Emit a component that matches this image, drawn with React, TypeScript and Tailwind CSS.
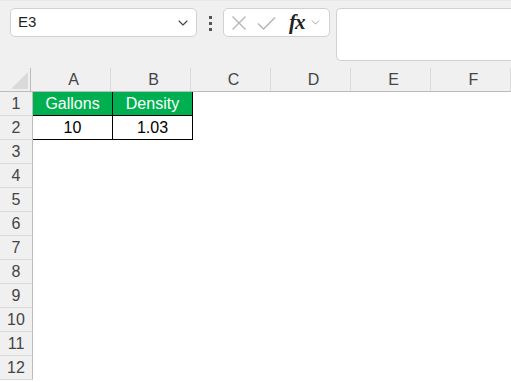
import {ChevronDown} from "lucide-react";

const columns = ["A", "B", "C", "D", "E", "F"];
const rows = Array.from({length: 12}, (_, i) => i + 1);

const cells: Record<string, {text: string; className: string}> = {
  A1: {text: "Gallons", className: "bg-[#00b050] text-white border-r border-b border-black"},
  B1: {text: "Density", className: "bg-[#00b050] text-white border-r border-b border-black"},
  A2: {text: "10", className: "bg-white text-black border-r border-b border-black"},
  B2: {text: "1.03", className: "bg-white text-black border-r border-b border-black"},
};

function Toolbar() {
  return (
    <div className="flex items-start h-[68px] bg-[#f0f0f0] pl-[10px] pt-[7px] border-t border-[#e8e8e8]">
      <div
        className="flex items-center justify-between w-[187px] h-[29px] bg-white border border-[#d1d1d1] rounded-[5px] pl-[7px] pr-[5px]">
        <span className="text-[15px] text-[#1f1f1f]">E3</span>
        <ChevronDown size={16} strokeWidth={1.6} className="text-[#444]"/>
      </div>

      <div className="flex flex-col gap-[3px] w-[26px] items-center pt-[8px]">
        <span className="w-[3px] h-[3px] bg-[#555]"/>
        <span className="w-[3px] h-[3px] bg-[#555]"/>
        <span className="w-[3px] h-[3px] bg-[#555]"/>
      </div>

      <div className="flex items-center w-[107px] h-[29px] bg-white border border-[#d1d1d1] rounded-[5px] pl-[7px]">
        <svg width="16" height="16" viewBox="0 0 16 16" className="text-[#b3b3b3]">
          <path d="M1.5 1.5 L14.5 14.5 M14.5 1.5 L1.5 14.5" stroke="currentColor" strokeWidth="1.3" fill="none"/>
        </svg>
        <svg width="19" height="16" viewBox="0 0 19 16" className="ml-[10px] text-[#b3b3b3]">
          <path d="M1 8.5 L6.5 14 L18 2.5" stroke="currentColor" strokeWidth="1.3" fill="none"/>
        </svg>
        <span className="ml-[13px] text-[21px] italic font-semibold text-[#222] leading-none tracking-[-1px]"
              style={{fontFamily: '"Liberation Serif", serif'}}>fx</span>
        <ChevronDown size={13} strokeWidth={1.4} className="ml-[4px] text-[#888]"/>
      </div>

      <div className="ml-[6px] flex-1 h-[53px] bg-white border border-[#d1d1d1] rounded-l-[5px] border-r-0"/>
    </div>
  );
}

function HeaderRow() {
  return (
    <div className="flex h-[24px] bg-[#f0f0f0] border-b border-[#bcbcbc]">
      <div className="relative w-[33px] h-full border-r border-[#bcbcbc]">
        <svg width="17" height="17" viewBox="0 0 17 17" className="absolute right-[2px] bottom-[2px]">
          <path d="M17 0 L17 17 L0 17 Z" fill="#dadada"/>
        </svg>
      </div>
      {columns.map(col => (
        <div key={col}
             className="w-[80px] shrink-0 flex items-center justify-center pl-[6px] border-r border-[#dadada] text-[16px] text-[#444]">
          {col}
        </div>
      ))}
    </div>
  );
}

export default function App() {
  return (
    <div className="w-[511px] h-[382px] overflow-hidden bg-white"
         style={{fontFamily: '"Liberation Sans", Arial, sans-serif'}}>
      <Toolbar/>
      <HeaderRow/>
      {rows.map(row => (
        <div key={row} className="flex h-[24px]">
          <div
            className="w-[33px] shrink-0 flex items-center justify-center bg-[#f0f0f0] border-r border-b border-[#bcbcbc] border-b-[#dadada] text-[16px] text-[#444]">
            {row}
          </div>
          {columns.map(col => {
            const cell = cells[col + row];
            return (
              <div key={col}
                   className={`w-[80px] shrink-0 flex items-center justify-center text-[16px] ${cell ? cell.className : ""}`}>
                {cell?.text}
              </div>
            );
          })}
        </div>
      ))}
    </div>
  );
}
